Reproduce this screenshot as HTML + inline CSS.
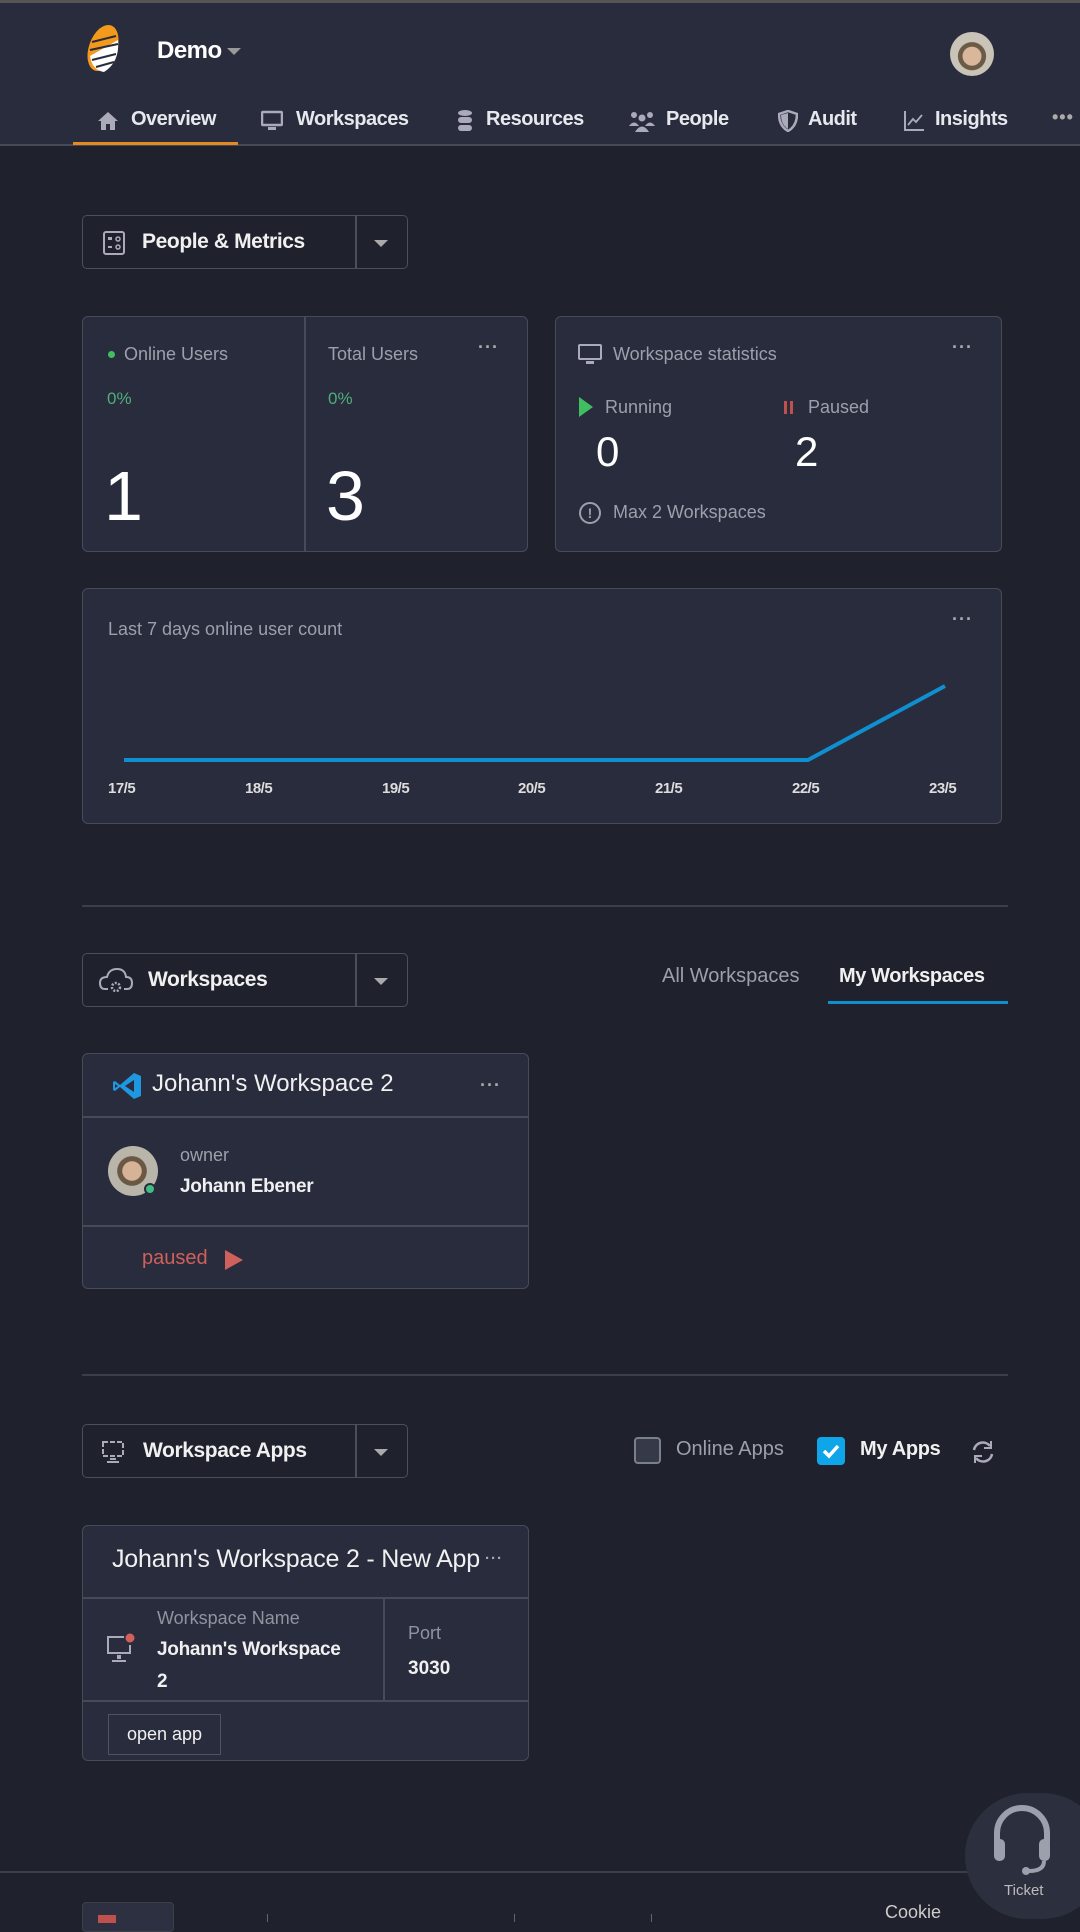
<!DOCTYPE html>
<html><head><meta charset="utf-8"><style>
*{margin:0;padding:0;box-sizing:border-box}
body{width:1080px;height:1920px;background:#1f222d;font-family:"Liberation Sans",sans-serif;color:#fff;position:relative;overflow:hidden}
.a{position:absolute}
.hdr{left:0;top:0;width:1080px;height:146px;background:#282c3c;border-top:3px solid #555;border-bottom:2px solid #454a58}
.nav{top:108px;font-size:20px;font-weight:bold;color:#e6e8ee;letter-spacing:-0.5px}
.card{background:#282c3c;border:1.5px solid #464b59;border-radius:6px}
.dd{border:1.5px solid #4a4f5d;border-radius:5px;height:54px}
.dd .t{position:absolute;top:14px;font-size:21px;font-weight:bold;color:#f0f0f0;letter-spacing:-0.4px}
.dd .sep{position:absolute;left:272px;top:0;width:1.5px;height:100%;background:#4a4f5d}
.dd .car{position:absolute;left:291px;top:24px;border-left:7px solid transparent;border-right:7px solid transparent;border-top:7px solid #aaa}
.lbl{font-size:18px;color:#9ba0ac}
.dots{font-size:18px;color:#aaa;letter-spacing:1px;font-weight:bold}
.hr{left:82px;width:926px;height:2px;background:#3b3f4c}
.cl{top:780px;font-size:15px;font-weight:bold;color:#ddd;letter-spacing:-0.5px}
</style></head><body>
<div class="a hdr"></div>
<svg class="a" style="left:82px;top:22px" width="42" height="52" viewBox="0 0 42 52">
<ellipse cx="21" cy="26" rx="14" ry="24" transform="rotate(20 21 26)" fill="#f39a1c"/>
<path d="M8 34 L36 18 Q38 40 22 50 Q10 48 8 34Z" fill="#fff"/>
<g stroke="#282c3c" stroke-width="2"><line x1="10" y1="20" x2="34" y2="14"/><line x1="8" y1="28" x2="36" y2="22"/><line x1="10" y1="38" x2="34" y2="32"/><line x1="14" y1="45" x2="32" y2="40"/></g>
</svg>
<div class="a" style="left:157px;top:37px;font-size:24px;font-weight:bold;letter-spacing:-0.5px">Demo</div>
<div class="a" style="left:227px;top:48px;border-left:7px solid transparent;border-right:7px solid transparent;border-top:7px solid #999"></div>
<div class="a" style="left:950px;top:32px;width:44px;height:44px;border-radius:50%;background:radial-gradient(circle at 50% 55%,#d9b79a 0 28%,#6b5a46 30% 42%,#c9c3b8 44%)"></div>
<svg class="a" style="left:97px;top:111px" width="22" height="20" viewBox="0 0 22 20"><path d="M11 1 L21 10 H18 V19 H13 V13 H9 V19 H4 V10 H1Z" fill="#aab"/></svg>
<div class="a nav" style="left:131px">Overview</div>
<div class="a" style="left:73px;top:142px;width:165px;height:3px;background:#e6891e"></div>
<svg class="a" style="left:261px;top:110px" width="22" height="22" viewBox="0 0 22 22"><rect x="1" y="2" width="20" height="13" rx="1" fill="none" stroke="#aab" stroke-width="2.5"/><rect x="7" y="17" width="8" height="3" fill="#aab"/></svg>
<div class="a nav" style="left:296px">Workspaces</div>
<svg class="a" style="left:457px;top:109px" width="16" height="24" viewBox="0 0 16 24"><ellipse cx="8" cy="4" rx="7" ry="3" fill="#aab"/><rect x="1" y="8" width="14" height="6" rx="3" fill="#aab"/><rect x="1" y="16" width="14" height="6" rx="3" fill="#aab"/></svg>
<div class="a nav" style="left:486px">Resources</div>
<svg class="a" style="left:628px;top:110px" width="28" height="22" viewBox="0 0 28 22"><circle cx="6" cy="5" r="3" fill="#aab"/><circle cx="22" cy="5" r="3" fill="#aab"/><circle cx="14" cy="8" r="3.5" fill="#aab"/><path d="M1 16 Q6 9 11 16Z M17 16 Q22 9 27 16Z M7 22 Q14 11 21 22Z" fill="#aab"/></svg>
<div class="a nav" style="left:666px">People</div>
<svg class="a" style="left:778px;top:110px" width="20" height="22" viewBox="0 0 20 22"><path d="M10 1 L19 4 Q19 16 10 21 Q1 16 1 4Z" fill="none" stroke="#aab" stroke-width="2.5"/><path d="M10 3 V19 Q3 15 3 5Z" fill="#aab"/></svg>
<div class="a nav" style="left:808px">Audit</div>
<svg class="a" style="left:903px;top:110px" width="22" height="22" viewBox="0 0 22 22"><path d="M2 1 V20 H21" fill="none" stroke="#aab" stroke-width="2"/><path d="M5 15 L10 9 L13 12 L19 5" fill="none" stroke="#aab" stroke-width="1.8"/></svg>
<div class="a nav" style="left:935px">Insights</div>
<div class="a dots" style="left:1052px;top:107px">•••</div>

<div class="a dd" style="left:82px;top:215px;width:326px">
<svg class="a" style="left:20px;top:15px" width="22" height="24" viewBox="0 0 22 24"><rect x="1" y="1" width="20" height="22" rx="2" fill="none" stroke="#aab" stroke-width="2"/><rect x="5" y="6" width="4" height="3" fill="#aab"/><circle cx="15" cy="8" r="2" fill="none" stroke="#aab" stroke-width="1.5"/><rect x="5" y="15" width="4" height="2" fill="#aab"/><circle cx="15" cy="16" r="2" fill="none" stroke="#aab" stroke-width="1.5"/></svg>
<div class="t" style="left:59px">People &amp; Metrics</div><div class="sep"></div><div class="car"></div></div>

<div class="a card" style="left:82px;top:316px;width:446px;height:236px"></div>
<div class="a" style="left:304px;top:317px;width:1.5px;height:234px;background:#464b59"></div>
<div class="a" style="left:108px;top:351px;width:7px;height:7px;border-radius:50%;background:#3fbf5f"></div>
<div class="a lbl" style="left:124px;top:344px">Online Users</div>
<div class="a" style="left:107px;top:389px;font-size:17px;color:#4fae7a">0%</div>
<div class="a" style="left:104px;top:456px;font-size:70px;color:#fff">1</div>
<div class="a lbl" style="left:328px;top:344px">Total Users</div>
<div class="a" style="left:328px;top:389px;font-size:17px;color:#4fae7a">0%</div>
<div class="a" style="left:326px;top:456px;font-size:70px;color:#fff">3</div>
<div class="a dots" style="left:478px;top:337px">···</div>

<div class="a card" style="left:555px;top:316px;width:447px;height:236px"></div>
<svg class="a" style="left:578px;top:344px" width="24" height="22" viewBox="0 0 24 22"><rect x="1" y="1" width="22" height="14" rx="1" fill="none" stroke="#aab" stroke-width="2"/><rect x="8" y="17" width="8" height="3" fill="#aab"/></svg>
<div class="a lbl" style="left:613px;top:344px">Workspace statistics</div>
<div class="a dots" style="left:952px;top:337px">···</div>
<svg class="a" style="left:579px;top:397px" width="14" height="20"><path d="M0 0 L14 10 L0 20Z" fill="#3fbf5f"/></svg>
<div class="a lbl" style="left:605px;top:397px">Running</div>
<div class="a" style="left:596px;top:428px;font-size:42px">0</div>
<div class="a" style="left:784px;top:401px;width:3px;height:13px;background:#c0504d"></div>
<div class="a" style="left:790px;top:401px;width:3px;height:13px;background:#c0504d"></div>
<div class="a lbl" style="left:808px;top:397px">Paused</div>
<div class="a" style="left:795px;top:428px;font-size:42px">2</div>
<div class="a" style="left:579px;top:502px;width:22px;height:22px;border-radius:50%;border:2px solid #9ba0ac;font-size:14px;color:#9ba0ac;text-align:center;line-height:18px;font-weight:bold">!</div>
<div class="a lbl" style="left:613px;top:502px">Max 2 Workspaces</div>

<div class="a card" style="left:82px;top:588px;width:920px;height:236px"></div>
<div class="a lbl" style="left:108px;top:619px">Last 7 days online user count</div>
<div class="a dots" style="left:952px;top:609px">···</div>
<svg class="a" style="left:0;top:0" width="1080" height="900"><polyline points="124,760 808,760 945,686" fill="none" stroke="#0f8fd0" stroke-width="4"/></svg>
<div class="a cl" style="left:108px">17/5</div>
<div class="a cl" style="left:245px">18/5</div>
<div class="a cl" style="left:382px">19/5</div>
<div class="a cl" style="left:518px">20/5</div>
<div class="a cl" style="left:655px">21/5</div>
<div class="a cl" style="left:792px">22/5</div>
<div class="a cl" style="left:929px">23/5</div>

<div class="a hr" style="top:905px"></div>

<div class="a dd" style="left:82px;top:953px;width:326px">
<svg class="a" style="left:16px;top:13px" width="34" height="28" viewBox="0 0 34 28"><path d="M9 22 H6 Q1 22 1 16 Q1 10 8 10 Q10 2 18 2 Q26 2 27 10 Q33 10 33 16 Q33 22 28 22 H25" fill="none" stroke="#aab" stroke-width="2"/><circle cx="17" cy="20" r="4" fill="none" stroke="#aab" stroke-width="2.5" stroke-dasharray="2 1.5"/></svg>
<div class="t" style="left:65px">Workspaces</div><div class="sep"></div><div class="car"></div></div>
<div class="a" style="left:662px;top:965px;font-size:20px;color:#9ba0ac">All Workspaces</div>
<div class="a" style="left:839px;top:965px;font-size:20px;font-weight:bold;color:#f0f0f0;letter-spacing:-0.4px">My Workspaces</div>
<div class="a" style="left:828px;top:1001px;width:180px;height:3px;background:#0f8fd0"></div>

<div class="a card" style="left:82px;top:1053px;width:447px;height:236px"></div>
<div class="a" style="left:83px;top:1116px;width:445px;height:1.5px;background:#464b59"></div>
<div class="a" style="left:83px;top:1225px;width:445px;height:1.5px;background:#464b59"></div>
<svg class="a" style="left:112px;top:1071px" width="30" height="30" viewBox="0 0 30 30"><path d="M22 2 L29 5 V25 L22 28 L8 16 L3 20 L1 19 V11 L3 10 L8 14 L22 2Z M22 9 L13 15 L22 21Z M3 13 V17 L6 15Z" fill="#1e98e0" fill-rule="evenodd"/></svg>
<div class="a" style="left:152px;top:1070px;font-size:24px;color:#f0f0f0">Johann's Workspace 2</div>
<div class="a dots" style="left:480px;top:1075px">···</div>
<div class="a" style="left:108px;top:1146px;width:50px;height:50px;border-radius:50%;background:radial-gradient(circle at 48% 50%,#d6b296 0 26%,#6a5845 28% 40%,#b9b5ab 42%)"></div>
<div class="a" style="left:144px;top:1183px;width:12px;height:12px;border-radius:50%;background:#3fbf7f;border:2px solid #282c3c"></div>
<div class="a lbl" style="left:180px;top:1145px">owner</div>
<div class="a" style="left:180px;top:1176px;font-size:19px;font-weight:bold;color:#f0f0f0;letter-spacing:-0.3px">Johann Ebener</div>
<div class="a" style="left:142px;top:1247px;font-size:20px;color:#d0605c">paused</div>
<svg class="a" style="left:225px;top:1250px" width="18" height="20"><path d="M0 0 L18 10 L0 20Z" fill="#d0605c"/></svg>

<div class="a hr" style="top:1374px"></div>

<div class="a dd" style="left:82px;top:1424px;width:326px">
<svg class="a" style="left:19px;top:14px" width="26" height="26" viewBox="0 0 26 26"><rect x="1" y="3" width="20" height="14" fill="none" stroke="#aab" stroke-width="2" stroke-dasharray="5 2"/><rect x="8" y="19" width="6" height="2" fill="#aab"/><rect x="5" y="22" width="12" height="2" fill="#aab"/></svg>
<div class="t" style="left:60px">Workspace Apps</div><div class="sep"></div><div class="car"></div></div>
<div class="a" style="left:634px;top:1437px;width:27px;height:27px;border:2px solid #7a7f8c;border-radius:4px;background:#363a48"></div>
<div class="a" style="left:676px;top:1438px;font-size:20px;color:#9ba0ac">Online Apps</div>
<div class="a" style="left:817px;top:1437px;width:28px;height:28px;border-radius:4px;background:#0ea5e9"></div>
<svg class="a" style="left:821px;top:1442px" width="20" height="18"><path d="M3 9 L8 14 L17 4" fill="none" stroke="#fff" stroke-width="3.5"/></svg>
<div class="a" style="left:860px;top:1438px;font-size:20px;font-weight:bold;color:#f0f0f0;letter-spacing:-0.3px">My Apps</div>
<svg class="a" style="left:970px;top:1439px" width="26" height="26" viewBox="0 0 26 26"><path d="M4 11 A9 9 0 0 1 20 7 M22 15 A9 9 0 0 1 6 19" fill="none" stroke="#aab" stroke-width="2.5"/><path d="M21 2 V9 H14" fill="none" stroke="#aab" stroke-width="2"/><path d="M5 24 V17 H12" fill="none" stroke="#aab" stroke-width="2"/></svg>

<div class="a card" style="left:82px;top:1525px;width:447px;height:236px"></div>
<div class="a" style="left:83px;top:1597px;width:445px;height:1.5px;background:#464b59"></div>
<div class="a" style="left:83px;top:1700px;width:445px;height:1.5px;background:#464b59"></div>
<div class="a" style="left:383px;top:1598px;width:1.5px;height:102px;background:#464b59"></div>
<div class="a" style="left:112px;top:1545px;font-size:25px;color:#f0f0f0;letter-spacing:-0.2px;white-space:nowrap">Johann's Workspace 2 - New App</div>
<div class="a dots" style="left:485px;top:1550px;font-size:15px">···</div>
<svg class="a" style="left:106px;top:1633px" width="30" height="32" viewBox="0 0 30 32"><path d="M18 4 H2 V20 H24 V12" fill="none" stroke="#aab" stroke-width="2"/><rect x="11" y="22" width="4" height="4" fill="#aab"/><rect x="6" y="27" width="14" height="2" fill="#aab"/><circle cx="24" cy="5" r="4.5" fill="#d0605c"/></svg>
<div class="a" style="left:157px;top:1608px;font-size:18px;color:#8f94a0">Workspace Name</div>
<div class="a" style="left:157px;top:1639px;font-size:19px;font-weight:bold;color:#f0f0f0;letter-spacing:-0.3px">Johann's Workspace</div>
<div class="a" style="left:157px;top:1671px;font-size:19px;font-weight:bold;color:#f0f0f0">2</div>
<div class="a" style="left:408px;top:1623px;font-size:18px;color:#8f94a0">Port</div>
<div class="a" style="left:408px;top:1658px;font-size:19px;font-weight:bold;color:#f0f0f0">3030</div>
<div class="a" style="left:108px;top:1714px;width:113px;height:41px;border:1.5px solid #4e5361;font-size:18px;color:#f0f0f0;text-align:center;line-height:38px">open app</div>

<div class="a" style="left:0;top:1871px;width:1080px;height:2px;background:#3b3f4c"></div>
<div class="a" style="left:82px;top:1902px;width:92px;height:30px;border-radius:4px;background:#2c3040;border:1.5px solid #3b3f4c"></div>
<div class="a" style="left:98px;top:1915px;width:18px;height:8px;background:#c0504d"></div>
<div class="a" style="left:267px;top:1914px;width:1px;height:8px;background:#666"></div>
<div class="a" style="left:514px;top:1914px;width:1px;height:8px;background:#666"></div>
<div class="a" style="left:651px;top:1914px;width:1px;height:8px;background:#666"></div>
<div class="a" style="left:885px;top:1902px;font-size:18px;color:#ccc">Cookie</div>
<div class="a" style="left:965px;top:1793px;width:140px;height:126px;border-radius:63px;background:#2c303e"></div>
<svg class="a" style="left:989px;top:1803px" width="66" height="72" viewBox="0 0 66 72"><path d="M8 40 V30 A25 25 0 0 1 58 30 V40" fill="none" stroke="#9ba0ac" stroke-width="6"/><rect x="5" y="36" width="11" height="22" rx="5" fill="#9ba0ac"/><rect x="50" y="36" width="11" height="22" rx="5" fill="#9ba0ac"/><path d="M55 58 Q55 68 40 68" fill="none" stroke="#9ba0ac" stroke-width="4"/><circle cx="37" cy="68" r="4" fill="#9ba0ac"/></svg>
<div class="a" style="left:1004px;top:1882px;font-size:15px;color:#bbb">Ticket</div>
</body></html>
